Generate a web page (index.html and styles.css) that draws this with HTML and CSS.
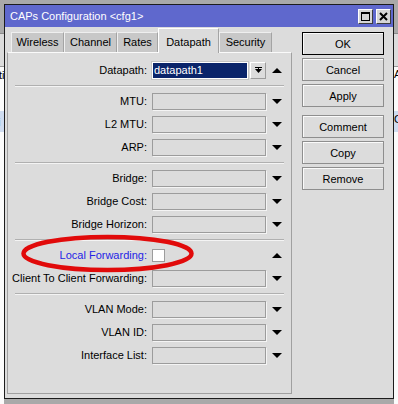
FILE: index.html
```html
<!DOCTYPE html>
<html>
<head>
<meta charset="utf-8">
<link rel="stylesheet" href="styles.css">
</head>
<body>
<div class="behind behind-left"><span class="bt bt1">ti</span><span class="bt bt2">i</span></div>
<div class="behind behind-right"><span class="bt bt3">Al</span><span class="bt bt4">C</span></div>
<div class="window">
  <div class="titlebar">
    <span class="title">CAPs Configuration &lt;cfg1&gt;</span>
    <div class="tbtns">
      <span class="tbtn"><svg width="11" height="11" viewBox="0 0 11 11"><rect x="1.5" y="1.5" width="8" height="8" fill="none" stroke="#000"/><rect x="1" y="1" width="9" height="2" fill="#000"/></svg></span>
      <span class="tbtn"><svg width="11" height="11" viewBox="0 0 11 11"><path d="M2 2L9 9M9 2L2 9" stroke="#000" stroke-width="2"/></svg></span>
    </div>
  </div>
  <div class="main">
    <div class="left">
      <div class="tabs">
        <div class="tab w53">Wireless</div>
        <div class="tab w53">Channel</div>
        <div class="tab w41">Rates</div>
        <div class="tab active w61">Datapath</div>
        <div class="tab w53">Security</div>
      </div>
      <div class="panel">
        <div class="form">
          <div class="lbl"><span>Datapath:</span></div>
          <div class="combo">
            <div class="cfield"><span class="sel">datapath1</span></div>
            <div class="cbtn"><svg width="9" height="9" viewBox="0 0 9 9"><rect x="1" y="1" width="7" height="1" fill="#000"/><rect x="4" y="2" width="1" height="1" fill="#000"/><path d="M1 3h7L4.5 7z" fill="#000"/></svg></div>
          </div>
          <div class="arr"><span class="up"></span></div>

          <div class="sep"></div>

          <div class="lbl"><span>MTU:</span></div><div class="inp"></div><div class="arr"><span class="down"></span></div>
          <div class="lbl"><span>L2 MTU:</span></div><div class="inp"></div><div class="arr"><span class="down"></span></div>
          <div class="lbl"><span>ARP:</span></div><div class="inp"></div><div class="arr"><span class="down"></span></div>

          <div class="sep"></div>

          <div class="lbl"><span>Bridge:</span></div><div class="inp"></div><div class="arr"><span class="down"></span></div>
          <div class="lbl"><span>Bridge Cost:</span></div><div class="inp"></div><div class="arr"><span class="down"></span></div>
          <div class="lbl"><span>Bridge Horizon:</span></div><div class="inp"></div><div class="arr"><span class="down"></span></div>

          <div class="sep"></div>

          <div class="lbl blue"><span>Local Forwarding:</span></div><div class="chkcell"><span class="chk"></span></div><div class="arr"><span class="up"></span></div>
          <div class="lbl"><span>Client To Client Forwarding:</span></div><div class="inp"></div><div class="arr"><span class="down"></span></div>

          <div class="sep"></div>

          <div class="lbl"><span>VLAN Mode:</span></div><div class="inp"></div><div class="arr"><span class="down"></span></div>
          <div class="lbl"><span>VLAN ID:</span></div><div class="inp"></div><div class="arr"><span class="down"></span></div>
          <div class="lbl"><span>Interface List:</span></div><div class="inp"></div><div class="arr"><span class="down"></span></div>
        </div>
      </div>
    </div>
    <div class="buttons">
      <div class="btn default">OK</div>
      <div class="btn">Cancel</div>
      <div class="btn">Apply</div>
      <div class="btn spaced">Comment</div>
      <div class="btn">Copy</div>
      <div class="btn">Remove</div>
    </div>
  </div>
</div>
<svg class="mark" width="398" height="404" viewBox="0 0 398 404">
  <ellipse cx="107.5" cy="253.5" rx="84" ry="16.5" fill="none" stroke="#e10a0a" stroke-width="4.5"/>
</svg>
</body>
</html>
```

FILE: styles.css
```css
* { box-sizing: border-box; }
html, body { margin: 0; padding: 0; }
body {
  width: 398px;
  height: 404px;
  overflow: hidden;
  position: relative;
  font-family: "Liberation Sans", Arial, sans-serif;
  font-size: 11px;
  color: #000;
  background: #a9a9a9;
}

/* windows behind the dialog */
.behind {
  position: absolute;
  top: 33px;
  bottom: 0;
  background: linear-gradient(to bottom, #dcdcdc 0 32px, #9a9a9a 32px 33px, #fbfbfb 33px 77px, #cfdcf0 77px 98px, #fbfbfb 98px);
  overflow: hidden;
  border-top: 1px solid #8a8a8a;
}
.behind-left { left: 0; width: 4px; }
.behind-right { left: 394px; width: 4px; }
.bt { position: absolute; font-size: 11px; line-height: 11px; }
.bt1 { left: -1px; top: 36px; }
.bt2 { left: -2px; top: 83px; }
.bt3 { left: 0; top: 35px; }
.bt4 { left: 0; top: 80px; }

.window {
  position: absolute;
  left: 4px;
  top: 4px;
  width: 390px;
  height: 395px;
  border: 1px solid #1c1c1c;
  background: #dcdcdc;
  display: flex;
  flex-direction: column;
}

.titlebar {
  height: 22px;
  flex: none;
  background: #5f68cd;
  color: #fff;
  display: flex;
  align-items: center;
  padding-left: 5px;
  padding-right: 2px;
}
.title { flex: 1; line-height: 22px; white-space: nowrap; }
.tbtns { display: flex; gap: 3px; }
.tbtn {
  width: 15px;
  height: 15px;
  background: #d6d6d6;
  border: 1px solid;
  border-color: #fff #3c3c3c #3c3c3c #fff;
  display: flex;
  align-items: center;
  justify-content: center;
}
.tbtn svg { display: block; }

.main {
  flex: 1;
  display: flex;
  padding: 0 0 4px 2px;
}
.left {
  width: 285px;
  flex: none;
  display: flex;
  flex-direction: column;
}

.tabs {
  height: 25px;
  flex: none;
  display: flex;
  align-items: flex-end;
  padding-left: 4px;
}
.tab {
  height: 20px;
  background: #c8c8c8;
  border-top: 1px solid #efefef;
  border-left: 1px solid #efefef;
  border-right: 1px solid #a4a4a4;
  text-align: center;
  line-height: 19px;
  white-space: nowrap;
}
.tab.active {
  height: 25px;
  margin-bottom: -1px;
  padding-top: 4px;
  background: #dcdcdc;
  border-top-color: #fff;
  border-left-color: #fff;
  position: relative;
  z-index: 1;
}
.w53 { width: 53px; }
.w41 { width: 41px; }
.w61 { width: 61px; }

.panel {
  flex: 1;
  border: 1px solid #a0a0a0;
  border-top-color: #fafafa;
  padding: 9px 3px 0 7px;
}

.form {
  display: grid;
  grid-template-columns: minmax(0, 1fr) 114px 22px;
  row-gap: 6px;
  align-items: center;
}
.lbl {
  height: 17px;
  line-height: 17px;
  display: flex;
  justify-content: flex-end;
  padding-right: 5px;
  white-space: nowrap;
}
.lbl.blue { color: #2424e6; }
.inp {
  height: 17px;
  border: 1px solid #9c9c9c;
  box-shadow: 1px 1px 0 #f4f4f4;
  background: #dcdcdc;
}
.sep {
  grid-column: 1 / -1;
  height: 2px;
  margin-right: 4px;
  border-top: 1px solid #b0b0b0;
  border-bottom: 1px solid #f4f4f4;
}

.combo { display: flex; height: 17px; gap: 1px; }
.cfield {
  width: 96px;
  height: 17px;
  border: 1px solid #fff;
  outline: 1px solid #c4c4c4;
  background: #0a246a;
  color: #fff;
  line-height: 15px;
  padding-left: 1px;
}
.cfield .sel { white-space: nowrap; }
.cbtn {
  flex: 1;
  margin-left: 1px;
  height: 17px;
  border: 1px solid;
  border-color: #fff #9c9c9c #9c9c9c #fff;
  background: #dcdcdc;
  display: flex;
  align-items: center;
  justify-content: center;
}
.cbtn svg { display: block; }

.arr {
  height: 17px;
  display: flex;
  align-items: center;
  justify-content: center;
}
.down {
  width: 0;
  height: 0;
  border-left: 5px solid transparent;
  border-right: 5px solid transparent;
  border-top: 5px solid #000;
}
.up {
  width: 0;
  height: 0;
  border-left: 5px solid transparent;
  border-right: 5px solid transparent;
  border-bottom: 5px solid #000;
}

.chkcell { height: 17px; display: flex; align-items: center; }
.chk {
  width: 13px;
  height: 13px;
  background: #fff;
  border: 1px solid #9c9c9c;
}

.buttons {
  width: 82px;
  margin-left: 10px;
  padding-top: 5px;
  display: flex;
  flex-direction: column;
  gap: 3px;
}
.btn {
  height: 23px;
  border: 1px solid #8e8e8e;
  box-shadow: inset 1px 1px 0 #fafafa;
  background: #dcdcdc;
  display: flex;
  align-items: center;
  justify-content: center;
  white-space: nowrap;
}
.btn.default {
  border-color: #000;
}
.btn.spaced { margin-top: 5px; }

.mark {
  position: absolute;
  left: 0;
  top: 0;
  pointer-events: none;
}
```
